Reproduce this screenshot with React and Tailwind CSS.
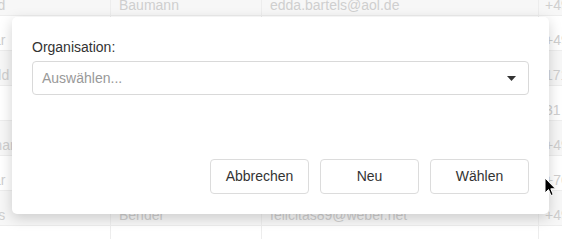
import React from 'react';

const rows = [
  { first: 'Bernd', last: 'Baumann', email: 'edda.bartels@aol.de', phone: '+49 171 2233' },
  { first: 'Oskar', last: 'Becker', email: 'o.becker@gmx.de', phone: '+49 160 4455' },
  { first: 'Harald', last: 'Bauer', email: 'harald.b@web.de', phone: '171 9988 22' },
  { first: 'Jan', last: 'Beck', email: 'jan.beck@t-online.de', phone: '31 4422 10' },
  { first: 'Hermann', last: 'Berger', email: 'h.berger@yahoo.de', phone: '+49 152 7711' },
  { first: 'Oskar', last: 'Bergmann', email: 'oskar@bergmann.de', phone: '+76 223 100' },
  { first: 'Jonas', last: 'Bender', email: 'felicitas89@weber.net', phone: '+49 175 3344' },
  { first: 'Lukas', last: 'Berg', email: 'lukas.berg@gmail.com', phone: '+49 151 2020' },
];

const Table = () => (
  <div className="h-[239px] overflow-hidden">
    <div className="-mt-[19px] -ml-[40px] flex flex-col">
      {rows.map((row, i) => (
        <div
          key={i}
          className={`flex h-[35px] shrink-0 border-b border-[#ededed] text-[14px] leading-4 text-[#cfcfcf] ${i % 2 === 0 ? 'bg-[#f7f7f7]' : 'bg-white'}`}
        >
          <div className="w-[151px] shrink-0 whitespace-nowrap border-r border-[#ededed] pl-2 pt-4">{row.first}</div>
          <div className="w-[151px] shrink-0 whitespace-nowrap border-r border-[#ededed] pl-2 pt-4">{row.last}</div>
          <div className="w-[277px] shrink-0 whitespace-nowrap border-r border-[#ededed] pl-2 pt-4">{row.email}</div>
          <div className="w-[120px] shrink-0 whitespace-nowrap pl-[6px] pt-4">{row.phone}</div>
        </div>
      ))}
    </div>
  </div>
);

const Caret = () => (
  <svg width="9" height="5" viewBox="0 0 9 5">
    <path d="M0 0 H9 L4.5 5 Z" fill="#333" />
  </svg>
);

const Pointer = () => (
  <svg width="13" height="20" viewBox="0 0 13 20" className="absolute left-[544px] top-[177px]">
    <path d="M1 1 V16 L4.5 12.5 L7 18.5 L9.2 17.6 L6.8 11.8 H11.5 Z" fill="#000" stroke="#fff" strokeWidth="1" strokeLinejoin="round" />
  </svg>
);

const Button = ({ children }) => (
  <button className="h-[35px] w-[99px] rounded-[4px] border border-[#dcdcdc] bg-white text-[14px] text-[#333]">
    {children}
  </button>
);

export default function App() {
  return (
    <div className="relative h-[239px] w-[562px] overflow-hidden bg-white font-['Liberation_Sans',Arial,sans-serif]">
      <Table />
      <div className="absolute left-[12px] top-[17px] flex h-[197px] w-[537px] flex-col rounded-[5px] bg-white px-5 pt-5 pb-5 shadow-[0_4px_14px_rgba(0,0,0,0.18)]">
        <label className="text-[14px] leading-5 text-[#333]">Organisation:</label>
        <div className="mt-[4px] flex h-[34px] items-center justify-between rounded-[4px] border border-[#d9d9d9] pl-[9px] pr-[12px]">
          <span className="text-[14px] text-[#999]">Auswählen...</span>
          <Caret />
        </div>
        <div className="mt-auto flex justify-end gap-[11px]">
          <Button>Abbrechen</Button>
          <Button>Neu</Button>
          <Button>Wählen</Button>
        </div>
      </div>
      <Pointer />
    </div>
  );
}
